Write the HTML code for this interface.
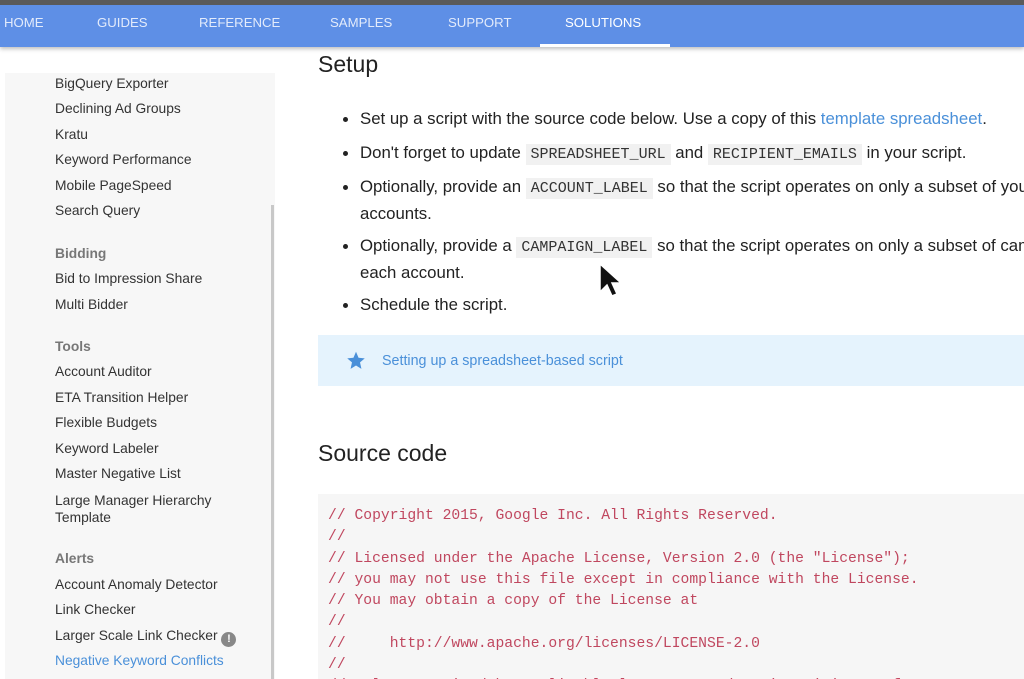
<!DOCTYPE html>
<html><head><meta charset="utf-8"><style>
*{margin:0;padding:0;box-sizing:border-box}
html,body{width:1024px;height:679px;overflow:hidden}
body{background:#fff;font-family:"Liberation Sans",sans-serif;position:relative}
#w{position:absolute;left:0;top:0;width:1024px;height:679px;overflow:hidden}
.top{position:absolute;left:0;top:0;width:1024px;height:5px;background:#5a5a5a}
.nav{position:absolute;left:0;top:0;width:1024px;height:47px;background:#5e8fe6;box-shadow:0 2px 4px rgba(0,0,0,.25)}
.nav span{position:absolute;top:15px;color:#e3ebfb;font-size:13.2px}
.nav .act{color:#fff}
.ind{position:absolute;left:540px;top:44px;width:130px;height:3px;background:#fff}
.side{position:absolute;left:5px;top:73px;width:270px;height:606px;background:#f7f7f7}
.sb{position:absolute;left:271px;top:205px;width:3px;height:474px;background:#c8c8c8}
.si{position:absolute;left:55px;font-size:13.8px;color:#333}
.sh{position:absolute;left:55px;font-size:13.8px;color:#777;font-weight:bold}
h2{position:absolute;left:318px;font-weight:normal;font-size:23px;color:#222}
.li{position:absolute;left:360px;font-size:16.8px;color:#222;line-height:25px}
.li:before{content:"";position:absolute;left:-17px;top:11px;width:5px;height:5px;border-radius:50%;background:#222}
code{font-family:"Liberation Mono",monospace;font-size:15px;background:#f1f1f1;color:#333;padding:2px 5px}
a{color:#4a90d9;text-decoration:none}
.call{position:absolute;left:318px;top:335px;width:706px;height:51px;background:#e5f3fd}
.code{position:absolute;left:318px;top:494px;width:706px;height:185px;overflow:hidden;background:#f6f6f6;font-family:"Liberation Mono",monospace;font-size:14.7px;color:#c0475f;padding:12px 0 0 10px;line-height:21.3px;white-space:pre}
</style></head><body><div id="w">
<div class="nav">
<span style="left:4px">HOME</span><span style="left:97px">GUIDES</span><span style="left:199px">REFERENCE</span><span style="left:330px">SAMPLES</span><span style="left:448px">SUPPORT</span><span class="act" style="left:565px">SOLUTIONS</span>
<div class="ind"></div></div>
<div class="top"></div>
<div class="side"></div><div class="sb"></div>
<div class="si" style="top:76px">BigQuery Exporter</div>
<div class="si" style="top:101px">Declining Ad Groups</div>
<div class="si" style="top:127px">Kratu</div>
<div class="si" style="top:152px">Keyword Performance</div>
<div class="si" style="top:178px">Mobile PageSpeed</div>
<div class="si" style="top:203px">Search Query</div>
<div class="sh" style="top:246px">Bidding</div>
<div class="si" style="top:271px">Bid to Impression Share</div>
<div class="si" style="top:297px">Multi Bidder</div>
<div class="sh" style="top:339px">Tools</div>
<div class="si" style="top:364px">Account Auditor</div>
<div class="si" style="top:390px">ETA Transition Helper</div>
<div class="si" style="top:415px">Flexible Budgets</div>
<div class="si" style="top:441px">Keyword Labeler</div>
<div class="si" style="top:466px">Master Negative List</div>
<div class="si" style="top:492px;line-height:17px">Large Manager Hierarchy<br>Template</div>
<div class="sh" style="top:551px">Alerts</div>
<div class="si" style="top:577px">Account Anomaly Detector</div>
<div class="si" style="top:602px">Link Checker</div>
<div class="si" style="top:628px">Larger Scale Link Checker <span style="display:inline-block;width:15px;height:15px;border-radius:50%;background:#888;color:#fff;font-size:11px;text-align:center;line-height:15px;font-weight:bold;vertical-align:-2px">!</span></div>
<div class="si" style="top:653px;color:#4a90d9">Negative Keyword Conflicts</div>
<h2 style="top:51px">Setup</h2>
<div class="li" style="top:106px">Set up a script with the source code below. Use a copy of this <a>template spreadsheet</a>.</div>
<div class="li" style="top:140px">Don't forget to update <code>SPREADSHEET_URL</code> and <code>RECIPIENT_EMAILS</code> in your script.</div>
<div class="li" style="top:174px;white-space:nowrap">Optionally, provide an <code>ACCOUNT_LABEL</code> so that the script operates on only a subset of your<br>accounts.</div>
<div class="li" style="top:233px;white-space:nowrap">Optionally, provide a <code>CAMPAIGN_LABEL</code> so that the script operates on only a subset of campaigns in<br>each account.</div>
<div class="li" style="top:292px">Schedule the script.</div>
<div class="call"><svg style="position:absolute;left:27px;top:15px" width="22" height="21" viewBox="0 0 24 24"><path fill="#4a90d9" d="M12 2l2.9 6.9 7.1.6-5.4 4.7 1.6 7.3L12 17.7 5.8 21.5l1.6-7.3L2 9.5l7.1-.6z"/></svg><span style="position:absolute;left:64px;top:18px;font-size:14.3px;color:#4a90d9">Setting up a spreadsheet-based script</span></div>
<h2 style="top:440px">Source code</h2>
<div class="code">// Copyright 2015, Google Inc. All Rights Reserved.
//
// Licensed under the Apache License, Version 2.0 (the "License");
// you may not use this file except in compliance with the License.
// You may obtain a copy of the License at
//
//     http://www.apache.org/licenses/LICENSE-2.0
//
// Unless required by applicable law or agreed to in writing, software</div>
<svg style="position:absolute;left:598px;top:262px" width="26" height="40" viewBox="0 0 26 40"><path d="M2 2v28l7-7 5 11 5-2-5-11h9z" fill="#111" stroke="#fff" stroke-width="1.5"/></svg>
</div></body></html>
